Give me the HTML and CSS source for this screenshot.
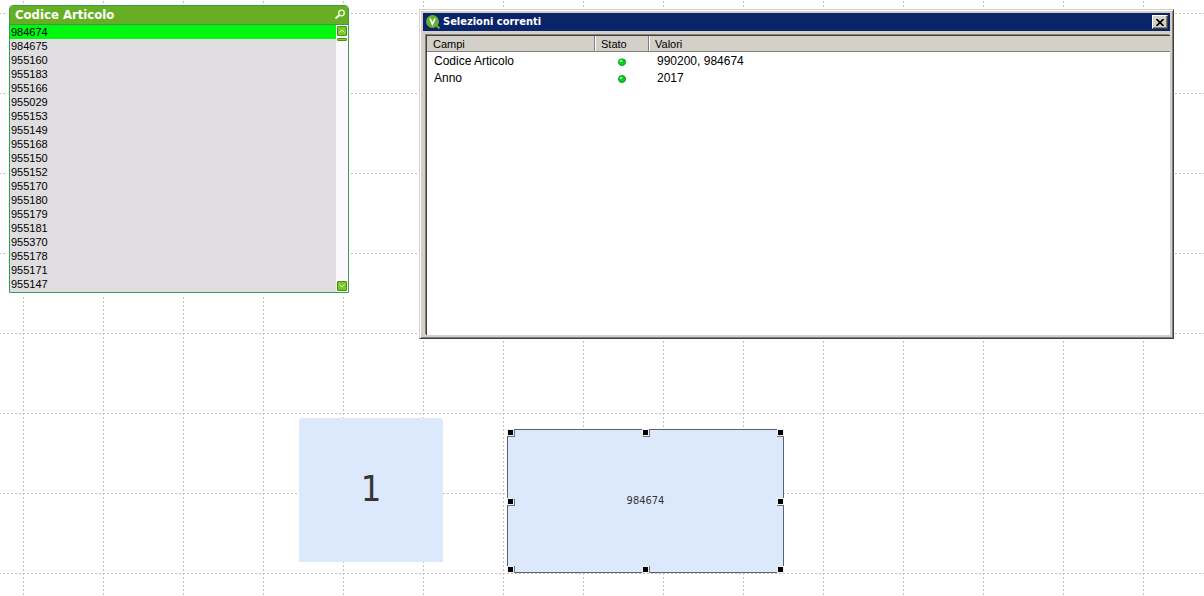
FILE: index.html
```html
<!DOCTYPE html>
<html lang="it">
<head>
<meta charset="utf-8">
<title>Selezioni correnti</title>
<link rel="stylesheet" href="styles.css">
</head>
<body>
<main class="sheet">
  <svg class="grid" aria-hidden="true">
    <defs>
      <pattern id="cell" x="23" y="13" width="80" height="80" patternUnits="userSpaceOnUse">
        <path d="M0 .5H80" stroke="#c0c0c0" stroke-dasharray="2 2"/>
        <path d="M.5 0V80" stroke="#c0c0c0" stroke-dasharray="2 2"/>
      </pattern>
    </defs>
    <rect width="100%" height="100%" fill="url(#cell)"/>
  </svg>

  <section class="listbox">
    <header class="listbox-head">
      <h2 class="listbox-title">Codice Articolo</h2>
      <button class="icon-button" aria-label="Cerca">
        <svg width="12" height="12" viewBox="0 0 12 12" fill="none" stroke="#f4ffe4"><circle cx="7.500" cy="4" r="2.800" stroke-width="1.300"/><path d="M5.500 6 1.500 9.500" stroke-width="2"/></svg>
      </button>
    </header>
    <div class="listbox-body">
      <ul class="values">
        <li class="value selected">984674</li>
        <li class="value">984675</li>
        <li class="value">955160</li>
        <li class="value">955183</li>
        <li class="value">955166</li>
        <li class="value">955029</li>
        <li class="value">955153</li>
        <li class="value">955149</li>
        <li class="value">955168</li>
        <li class="value">955150</li>
        <li class="value">955152</li>
        <li class="value">955170</li>
        <li class="value">955180</li>
        <li class="value">955179</li>
        <li class="value">955181</li>
        <li class="value">955370</li>
        <li class="value">955178</li>
        <li class="value">955171</li>
        <li class="value">955147</li>
      </ul>
      <div class="scrollbar">
        <button class="scroll-button" aria-label="Su"><svg width="8" height="8" viewBox="0 0 8 8" fill="none" stroke="#e4ffc0"><path d="M1.500 5.500 4 3 6.500 5.500"/></svg></button>
        <div class="scroll-thumb"></div>
        <button class="scroll-button scroll-down" aria-label="Giù"><svg width="8" height="8" viewBox="0 0 8 8" fill="none" stroke="#e4ffc0"><path d="M1.500 2.500 4 5 6.500 2.500"/></svg></button>
      </div>
    </div>
  </section>

  <section class="window">
    <header class="titlebar">
      <svg class="logo" width="14" height="14" viewBox="0 0 14 14"><circle cx="6.500" cy="6.500" r="6.500" fill="#62b030"/><path d="M10 10l3.500 3.500" stroke="#62b030" stroke-width="2"/><path d="M4 3.500 6.500 9 9 3.500" fill="none" stroke="#fff" stroke-width="1.800"/></svg>
      <h1 class="window-title">Selezioni correnti</h1>
      <button class="close" aria-label="Chiudi"><svg width="8" height="7" viewBox="0 0 8 7" stroke="#000" stroke-width="1.600"><path d="M.5 0l7 7M7.500 0l-7 7"/></svg></button>
    </header>
    <div class="window-body">
      <table class="selections">
        <thead><tr><th class="col-field">Campi</th><th class="col-state">Stato</th><th>Valori</th></tr></thead>
        <tbody>
          <tr>
            <td>Codice Articolo</td>
            <td class="state"><svg width="10" height="9" viewBox="0 0 10 9"><circle cx="5" cy="5" r="3.500" fill="#00d41c" stroke="#1e8a34"/><circle cx="4" cy="4" r="1.300" fill="#80ff80"/><path d="M1 1v2M3 0v2M5 0v2M7 0v2M9 1v2" stroke="#fff"/></svg></td>
            <td>990200, 984674</td>
          </tr>
          <tr>
            <td>Anno</td>
            <td class="state"><svg width="10" height="9" viewBox="0 0 10 9"><circle cx="5" cy="5" r="3.500" fill="#00d41c" stroke="#1e8a34"/><circle cx="4" cy="4" r="1.300" fill="#80ff80"/></svg></td>
            <td>2017</td>
          </tr>
        </tbody>
      </table>
    </div>
  </section>

  <section class="textbox count">1</section>

  <section class="textbox result">984674
    <div class="handles">
      <i class="handle"></i><i class="handle"></i><i class="handle"></i>
      <i class="handle"></i><i></i><i class="handle"></i>
      <i class="handle"></i><i class="handle"></i><i class="handle"></i>
    </div>
  </section>
</main>
</body>
</html>
```
FILE: styles.css
```css
* { box-sizing: border-box; }

body {
  margin: 0;
  background: #fff;
  color: #000;
  font-family: "Liberation Sans", Arial, sans-serif;
  font-size: 11px;
}

h1, h2 { margin: 0; }
button { padding: 0; border: 0; background: none; font: inherit; }
svg { display: block; }

.sheet {
  position: relative;
  min-height: 100vh;
  overflow: hidden;
}

.grid {
  position: absolute;
  inset: 0;
  width: 100%;
  height: 100%;
}

/* List box */
.listbox {
  position: absolute;
  left: 9px;
  top: 5px;
  width: 340px;
  border: 1px solid #32a050;
  border-radius: 4px 4px 0 0;
  background: #fff;
  box-shadow: 0 0 0 2px #fff;
}

.listbox-head {
  display: flex;
  align-items: center;
  justify-content: space-between;
  height: 19px;
  padding: 0 2px 0 5px;
  border-bottom: 1px solid #3c9844;
  border-radius: 3px 3px 0 0;
  background: #67ae24;
}

.listbox-title {
  color: #fff;
  font: bold 13px/18px "DejaVu Sans Condensed", "DejaVu Sans", sans-serif;
}

.listbox-body { display: flex; }

.values {
  flex: 1;
  margin: 0;
  padding: 0 0 1px;
  list-style: none;
  background: #dfdddf;
}

.value {
  height: 14px;
  padding-left: 1px;
  line-height: 14px;
}

.selected { background: #00f810; }

.scrollbar {
  display: flex;
  flex-direction: column;
  align-items: center;
  gap: 2px;
  width: 12px;
  padding: 1px 0;
  background: #fdf8fd;
}

.scroll-button {
  width: 10px;
  height: 10px;
  border: 1px solid #489010;
  border-radius: 1px;
  background: #78c828;
}

.scroll-thumb {
  width: 10px;
  height: 3px;
  border: 1px solid #489010;
  border-radius: 1px;
  background: #88d040;
}

.scroll-down { margin-top: auto; }

/* Floating window */
.window {
  position: absolute;
  left: 419px;
  top: 9px;
  display: flex;
  flex-direction: column;
  width: 755px;
  height: 330px;
  padding: 2px;
  border: 1px solid;
  border-color: #d4d0c8 #404040 #404040 #d4d0c8;
  background: #d4d0c8;
  box-shadow: inset 1px 1px #fff, inset -1px -1px #808080, 0 0 0 1px #fff;
}

.titlebar {
  display: flex;
  align-items: center;
  gap: 3px;
  height: 18px;
  margin: 1px;
  padding: 0 2px 0 3px;
  background: #0a246a;
}

.window-title {
  flex: 1;
  color: #fff;
  font: bold 11px/18px "DejaVu Sans Condensed", "DejaVu Sans", sans-serif;
}

.close {
  display: flex;
  align-items: center;
  justify-content: center;
  width: 16px;
  height: 14px;
  border: 1px solid;
  border-color: #fff #404040 #404040 #fff;
  background: #d4d0c8;
  box-shadow: inset -1px -1px #808080;
}

.window-body {
  flex: 1;
  margin: 3px 1px 1px 4px;
  border: solid #404040;
  border-width: 1px 0 0 1px;
  background: #fff;
  box-shadow: -1px -1px #808080;
}

.selections {
  width: 100%;
  border-collapse: separate;
  border-spacing: 0;
  table-layout: fixed;
  font-size: 12px;
}

.selections th {
  height: 16px;
  padding: 2px 0 0 6px;
  border-right: 1px solid #808080;
  border-bottom: 1px solid #808080;
  background: #d4d0c8;
  box-shadow: inset 1px 0 #fff;
  font-size: 11px;
  font-weight: normal;
  line-height: 13px;
  text-align: left;
}

.selections th:first-child { box-shadow: none; }
.selections th:last-child { border-right: 0; }
.col-field { width: 168px; }
.col-state { width: 54px; }

.selections td {
  height: 17px;
  padding: 2px 0 0 8px;
  line-height: 15px;
}

.selections td:first-child { padding-left: 7px; }
.selections .state { padding: 2px 0 0 22px; }

/* Text objects */
.textbox {
  position: absolute;
  display: flex;
  align-items: center;
  justify-content: center;
  background: #dce9fd;
  color: #363636;
  font-family: "DejaVu Sans Condensed", "DejaVu Sans", sans-serif;
}

.count {
  left: 299px;
  top: 418px;
  width: 144px;
  height: 144px;
  padding-bottom: 4px;
  border-radius: 4px 4px 0 0;
  font-size: 36px;
}

.result {
  left: 507px;
  top: 429px;
  width: 277px;
  height: 144px;
  padding-bottom: 2px;
  border: 1px solid #5e6268;
}

.handles {
  position: absolute;
  inset: -1px;
  display: grid;
  grid-template-columns: repeat(3, 7px);
  grid-template-rows: repeat(3, 7px);
  justify-content: space-between;
  align-content: space-between;
}

.handle {
  border: 1px solid #f0f0f0;
  background: #000;
  box-shadow: 1px 1px #707480;
}

.handle:nth-child(3n) { box-shadow: 0 1px #707480; }
.handle:nth-child(n + 7) { box-shadow: 1px 0 #707480; }
.handle:last-child { box-shadow: none; }
```
